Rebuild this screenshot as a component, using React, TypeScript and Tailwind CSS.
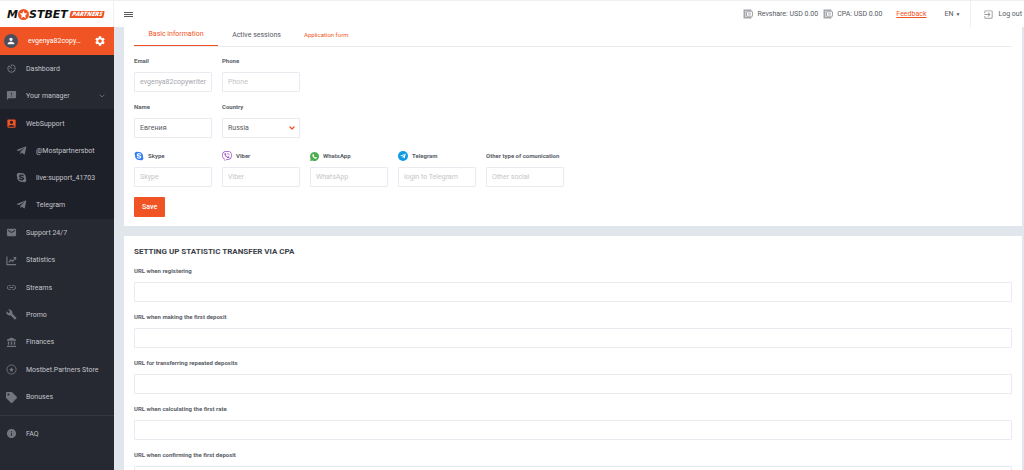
import React from 'react';
import {
  MdAccountBalance,
  MdAccountBox,
  MdAvTimer,
  MdBuild,
  MdEmail,
  MdExitToApp,
  MdFeedback,
  MdInfo,
  MdLink,
  MdPerson,
  MdSettings,
} from 'react-icons/md';
import { FaSkype, FaTag, FaTelegramPlane, FaViber } from 'react-icons/fa';
import { ChevronDown } from 'lucide-react';

interface IconProps {
  className?: string;
}

interface NavItemProps {
  label: string;
  icon: React.ComponentType<IconProps>;
  nested?: boolean;
  active?: boolean;
  expandable?: boolean;
}

const NavItem: React.FC<NavItemProps> = ({ label, icon: Icon, nested, active, expandable }) => (
  <a
    href="#"
    className={`flex min-h-[27px] items-center gap-[9px] pr-2 text-[#c3c4c9] ${nested ? 'pl-4' : 'pl-1.5'}`}
  >
    <Icon className={`size-[11px] shrink-0 ${active ? 'text-[#f15424]' : 'text-[#72747f]'}`} />
    <span className="flex-1 whitespace-nowrap">{label}</span>
    {expandable && <ChevronDown className="size-2 text-[#85878f]" />}
  </a>
);

const StoreIcon: React.FC<IconProps> = ({ className }) => (
  <svg viewBox="0 0 24 24" className={className} fill="currentColor" aria-hidden="true">
    <circle cx="12" cy="12" r="10" fill="none" stroke="currentColor" strokeWidth="2" />
    <path d="M12 7l1.500 3.500 3.700.3-2.800 2.500.8 3.700L12 15l-3.200 2 .8-3.700-2.800-2.500 3.700-.3z" />
  </svg>
);

const StatisticsIcon: React.FC<IconProps> = ({ className }) => (
  <svg viewBox="0 0 24 24" className={className} fill="none" stroke="currentColor" strokeWidth="2.5" aria-hidden="true">
    <path d="M2 3v18h20" />
    <path d="M6 16l4.500-5.500 4 3.500 6-8" />
    <path d="M16 5.500h5v5" />
  </svg>
);

const mainItems: NavItemProps[] = [
  { label: 'Support 24/7', icon: MdEmail },
  { label: 'Statistics', icon: StatisticsIcon },
  { label: 'Streams', icon: MdLink },
  { label: 'Promo', icon: MdBuild },
  { label: 'Finances', icon: MdAccountBalance },
  { label: 'Mostbet.Partners Store', icon: StoreIcon },
  { label: 'Bonuses', icon: FaTag },
];

const urlFields = [
  'URL when registering',
  'URL when making the first deposit',
  'URL for transferring repeated deposits',
  'URL when calculating the first rate',
  'URL when confirming the first deposit',
];

const WalletIcon = () => (
  <svg viewBox="0 0 20 20" className="size-[10px] shrink-0" aria-hidden="true">
    <path d="M1 1h16v3H5v12h12v3H1z" fill="#a5a6ab" />
    <path d="M7 5.500h12v9H7z" fill="none" stroke="#a5a6ab" strokeWidth="2" />
    <circle cx="13" cy="10" r="2" fill="none" stroke="#a5a6ab" strokeWidth="1.5" />
  </svg>
);

const Logo = () => (
  <a
    href="#"
    className="flex items-center pl-[7px] font-['DejaVu_Sans',sans-serif] text-[11px] leading-none font-bold text-[#111] italic"
  >
    M
    <svg viewBox="0 0 20 20" className="size-[11px]" aria-hidden="true">
      <circle cx="10" cy="10" r="10" fill="#f15424" />
      <path d="M10 3l2 4.800 5 .4-3.800 3.400 1.200 5L10 13.900l-4.400 2.700 1.200-5L3 8.200l5-.4z" fill="#fff" />
    </svg>
    STBET
    <span className="ml-0.5 -skew-x-12 rounded-[1px] bg-[#f15424] px-0.5 font-['Open_Sans',sans-serif] text-[6px] leading-[7px] font-extrabold text-white">
      PARTNERS
    </span>
  </a>
);

const SkypeLogo = () => <FaSkype className="size-[10px] text-[#2f7cf6]" />;
const ViberLogo = () => <FaViber className="size-[10px] text-[#9b4fc0]" />;
const WhatsAppLogo = () => (
  <svg viewBox="0 0 20 20" className="size-[9px]" aria-hidden="true">
    <path d="M10 0a10 10 0 1 1-4.800 18.700L0 20l1.400-5A10 10 0 0 1 10 0z" fill="#4caf50" />
    <path
      d="M6.500 5c.8-.6 1.500-.3 1.800.5l.6 1.500c.2.6-.9 1.400-.7 1.900.7 1.400 1.700 2.300 3 2.900.6.200 1.300-1.200 1.900-.9l1.800.9c.6.4.4 1.500-.2 2.200-1.200 1.200-3.300 1-5.400-.2C7.400 12.700 5.500 10.500 5.200 8c-.1-1.200.4-2.300 1.300-3z"
      fill="#fff"
    />
  </svg>
);
const TelegramLogo = () => (
  <span className="flex size-[10px] items-center justify-center rounded-full bg-[#0e9be6]">
    <FaTelegramPlane className="size-1.5 text-white" />
  </span>
);

interface FieldProps {
  id: string;
  label: string;
  placeholder?: string;
  value?: string;
  disabled?: boolean;
  logo?: React.ReactNode;
}

const labelClass =
  'mb-[6px] flex h-[10px] items-center gap-1 text-[6px] font-bold whitespace-nowrap text-[#5a5e68]';

const inputClass =
  'h-5 w-full rounded-[1px] border border-[#eaebf1] bg-white px-[5px] text-[7px] text-[#555a63] placeholder:text-[#c4c5c9] disabled:text-[#a5a7ad]';

const Field: React.FC<FieldProps> = ({ id, label, placeholder, value, disabled, logo }) => (
  <div className="min-w-0">
    <label htmlFor={id} className={labelClass}>
      {logo}
      {label}
    </label>
    <input id={id} type="text" placeholder={placeholder} defaultValue={value} disabled={disabled} className={inputClass} />
  </div>
);

const Sidebar = () => (
  <aside className="w-[114px] shrink-0 bg-[#262832]">
    <div className="flex h-7 items-center bg-[#f15424] pr-2 pl-1 text-white">
      <span className="flex size-[14px] items-center justify-center rounded-full bg-[#4b4f5c]">
        <MdPerson className="size-[10px]" />
      </span>
      <span className="ml-[10px] flex-1">evgenya82copy…</span>
      <button type="button" aria-label="Settings">
        <MdSettings className="size-3" />
      </button>
    </div>
    <nav>
      <NavItem label="Dashboard" icon={MdAvTimer} />
      <NavItem label="Your manager" icon={MdFeedback} expandable />
      <div className="bg-[#1e2029] py-px">
        <NavItem label="WebSupport" icon={MdAccountBox} active />
        <NavItem label="@Mostpartnersbot" icon={FaTelegramPlane} nested />
        <NavItem label="live:support_41703" icon={FaSkype} nested />
        <NavItem label="Telegram" icon={FaTelegramPlane} nested />
      </div>
      <div className="grid min-h-48 auto-rows-fr">
        {mainItems.map((item) => (
          <NavItem key={item.label} {...item} />
        ))}
      </div>
      <div className="mt-1 border-t border-[#363844] pt-1">
        <NavItem label="FAQ" icon={MdInfo} />
      </div>
    </nav>
  </aside>
);

const Header = () => (
  <header className="flex h-[27px] shrink-0 items-stretch border-t border-[#eff0f2] bg-white text-[#555a63]">
    <div className="flex w-[114px] shrink-0 items-center border-r border-[#eff0f2]">
      <Logo />
    </div>
    <button type="button" aria-label="Menu" className="ml-[10px] flex flex-col justify-center gap-px">
      <span className="h-px w-[9px] bg-[#555a63]" />
      <span className="h-px w-[9px] bg-[#555a63]" />
      <span className="h-px w-[9px] bg-[#555a63]" />
    </button>
    <div className="ml-auto flex items-center">
      <span className="flex items-center gap-1">
        <WalletIcon />
        Revshare: USD 0.00
      </span>
      <span className="ml-[5px] flex items-center gap-1">
        <WalletIcon />
        CPA: USD 0.00
      </span>
      <a href="#" className="ml-[14px] text-[#f15424] underline">
        Feedback
      </a>
      <button type="button" className="ml-[18px] flex items-center gap-0.5">
        EN <span className="text-[5px]">▼</span>
      </button>
    </div>
    <a href="#" className="ml-2.5 flex items-center gap-1 border-l border-[#eff0f2] pr-0.5 pl-3">
      <MdExitToApp className="size-[11px] text-[#9b9ca2]" />
      Log out
    </a>
  </header>
);

export default function App() {
  return (
    <div className="flex h-screen flex-col overflow-hidden font-[Roboto,sans-serif] text-[7px] leading-[10px]">
      <Header />
      <div className="flex min-h-0 flex-1">
        <Sidebar />
        <main className="min-w-0 flex-1 overflow-hidden bg-[#e1e6ed] pr-0.5 pl-[10px]">
          <section className="bg-white px-[10px] pb-[9px]">
            <div className="flex h-5 border-b border-[#eaebf1] text-[#555a63]">
              <button type="button" className="w-[84px] border-b border-[#f15424] pb-1 text-[#f15424]">
                Basic information
              </button>
              <button type="button" className="w-[77px] pb-1">
                Active sessions
              </button>
              <button type="button" className="px-[9px] pb-1 text-[6px] text-[#f15424]">
                Application form
              </button>
            </div>
            <form>
              <div className="mt-[9px] grid grid-cols-[repeat(2,78px)] gap-[10px]">
                <Field id="email" label="Email" value="evgenya82copywriter@gmail.com" disabled />
                <Field id="phone" label="Phone" placeholder="Phone" />
                <Field id="name" label="Name" value="Евгения" />
                <div>
                  <label htmlFor="country" className={labelClass}>
                    Country
                  </label>
                  <div className="relative">
                    <select id="country" className={`${inputClass} appearance-none`}>
                      <option>Russia</option>
                    </select>
                    <ChevronDown className="pointer-events-none absolute top-1.5 right-1 size-2 stroke-4 text-[#f15424]" />
                  </div>
                </div>
              </div>
              <div className="mt-[13px] grid grid-cols-[repeat(5,78px)] gap-[10px]">
                <Field id="skype" label="Skype" placeholder="Skype" logo={<SkypeLogo />} />
                <Field id="viber" label="Viber" placeholder="Viber" logo={<ViberLogo />} />
                <Field id="whatsapp" label="WhatsApp" placeholder="WhatsApp" logo={<WhatsAppLogo />} />
                <Field id="telegram" label="Telegram" placeholder="login to Telegram" logo={<TelegramLogo />} />
                <Field id="other" label="Other type of comunication" placeholder="Other social" />
              </div>
              <button type="submit" className="mt-[10px] h-5 rounded-[1px] bg-[#f15424] px-2 font-medium text-white">
                Save
              </button>
            </form>
          </section>
          <section className="mt-[10px] bg-white px-[10px] pt-[10px] pb-5">
            <h2 className="mb-2 text-[8px] leading-3 font-bold text-[#3a3e48]">SETTING UP STATISTIC TRANSFER VIA CPA</h2>
            <form className="flex flex-col gap-[10px]">
              {urlFields.map((label, i) => (
                <Field key={label} id={`url-${i}`} label={label} />
              ))}
            </form>
          </section>
        </main>
      </div>
    </div>
  );
}
